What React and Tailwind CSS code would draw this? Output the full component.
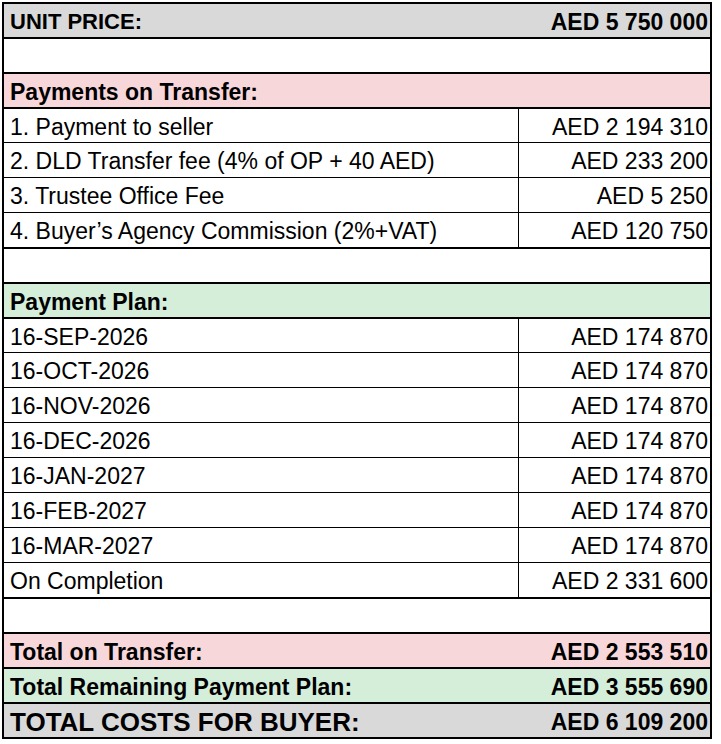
const items = [
  ["1. Payment to seller", "AED 2 194 310"],
  ["2. DLD Transfer fee (4% of OP + 40 AED)", "AED 233 200"],
  ["3. Trustee Office Fee", "AED 5 250"],
  ["4. Buyer’s Agency Commission (2%+VAT)", "AED 120 750"],
];

const plan = [
  ["16-SEP-2026", "AED 174 870"],
  ["16-OCT-2026", "AED 174 870"],
  ["16-NOV-2026", "AED 174 870"],
  ["16-DEC-2026", "AED 174 870"],
  ["16-JAN-2027", "AED 174 870"],
  ["16-FEB-2027", "AED 174 870"],
  ["16-MAR-2027", "AED 174 870"],
  ["On Completion", "AED 2 331 600"],
];

function Row({ label, value, thick, bg = "bg-white", bold, big, split }) {
  return (
    <div
      className={`flex items-center whitespace-nowrap ${bg} ${
        thick ? "h-[35px] border-t-2" : "h-[35px] border-t"
      } border-black ${bold ? "font-bold" : ""}`}
    >
      <div
        className={`flex h-full items-center pl-[6px] pt-[3px] ${
          split ? "w-[515px] shrink-0 border-r border-black" : "flex-1"
        } ${big ? "text-[26px]" : "text-[23px]"}`}
      >
        {label}
      </div>
      <div className="flex h-full flex-1 items-center justify-end pr-[2px] pt-[3px] text-[23px]">
        {value}
      </div>
    </div>
  );
}

export default function App() {
  return (
    <div className="min-h-screen bg-white pl-[2px] pt-[2px]">
      <div
        className="w-[710px] border-2 border-black leading-none text-black"
        style={{ fontFamily: '"Liberation Sans", Arial, sans-serif' }}
      >
        <div className="flex h-[33px] items-center whitespace-nowrap bg-[#d9d9d9] pt-[3px] font-bold">
          <div className="flex-1 pl-[6px] text-[22px]">UNIT PRICE:</div>
          <div className="pr-[2px] text-[23px]">AED 5 750 000</div>
        </div>

        <Row thick />
        <Row thick bg="bg-[#f8d7da]" bold label="Payments on Transfer:" />
        {items.map(([l, v], i) => (
          <Row key={l} thick={i === 0} split label={l} value={v} />
        ))}

        <Row thick />
        <Row thick bg="bg-[#d4eeda]" bold label="Payment Plan:" />
        {plan.map(([l, v], i) => (
          <Row key={l} thick={i === 0} split label={l} value={v} />
        ))}

        <Row thick />
        <Row thick bg="bg-[#f8d7da]" bold label="Total on Transfer:" value="AED 2 553 510" />
        <Row thick bg="bg-[#d4eeda]" bold label="Total Remaining Payment Plan:" value="AED 3 555 690" />
        <Row thick bg="bg-[#d9d9d9]" bold big label="TOTAL COSTS FOR BUYER:" value="AED 6 109 200" />
      </div>
    </div>
  );
}
